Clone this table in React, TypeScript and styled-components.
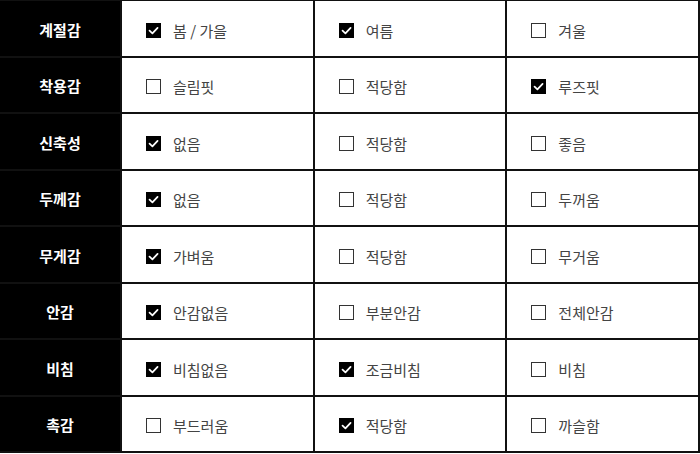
import React from "react";
import styled, { createGlobalStyle } from "styled-components";

const Global = createGlobalStyle`
  html, body { margin: 0; padding: 0; background: #fff; }
  body { font-family: "Noto Sans CJK KR", "Noto Sans", sans-serif; overflow: hidden; }
`;

const Table = styled.div`
  width: 700px;
  height: 454px;
  margin-top: -1px;
  box-sizing: border-box;
  display: grid;
  grid-template-columns: 120px repeat(3, 1fr);
  grid-template-rows: repeat(8, 1fr);
  gap: 2px;
  padding: 2px 2px 2px 0;
  background: #111;
`;

const Label = styled.div`
  background: #000;
  color: #fff;
  font-weight: 700;
  font-size: 15px;
  display: flex;
  align-items: center;
  justify-content: center;
  padding-top: 2px;
`;

const Cell = styled.div`
  background: #fff;
  display: flex;
  align-items: center;
  gap: 12px;
  padding: 4px 0 0 24px;
  font-size: 15px;
  color: #444;
`;

const Box = styled.span<{ $checked: boolean }>`
  width: 15px;
  height: 15px;
  box-sizing: border-box;
  flex: none;
  display: inline-flex;
  align-items: center;
  justify-content: center;
  background: ${(p) => (p.$checked ? "#000" : "#fff")};
  border: ${(p) => (p.$checked ? "none" : "1.3px solid #333")};
`;

const Check = () => (
  <svg width="11" height="11" viewBox="0 0 10 10">
    <path d="M1.4 5.2 L4 7.6 L8.7 2.6" fill="none" stroke="#fff" strokeWidth="1.6" strokeLinecap="round" strokeLinejoin="round" />
  </svg>
);

type Opt = [string, boolean];
const rows: { label: string; opts: Opt[] }[] = [
  { label: "계절감", opts: [["봄 / 가을", true], ["여름", true], ["겨울", false]] },
  { label: "착용감", opts: [["슬림핏", false], ["적당함", false], ["루즈핏", true]] },
  { label: "신축성", opts: [["없음", true], ["적당함", false], ["좋음", false]] },
  { label: "두께감", opts: [["없음", true], ["적당함", false], ["두꺼움", false]] },
  { label: "무게감", opts: [["가벼움", true], ["적당함", false], ["무거움", false]] },
  { label: "안감", opts: [["안감없음", true], ["부분안감", false], ["전체안감", false]] },
  { label: "비침", opts: [["비침없음", true], ["조금비침", true], ["비침", false]] },
  { label: "촉감", opts: [["부드러움", false], ["적당함", true], ["까슬함", false]] },
];

export default function App() {
  return (
    <>
      <Global />
      <Table>
        {rows.map((r) => (
          <React.Fragment key={r.label}>
            <Label>{r.label}</Label>
            {r.opts.map(([t, c], i) => (
              <Cell key={i}>
                <Box $checked={c}>{c && <Check />}</Box>
                <span>{t}</span>
              </Cell>
            ))}
          </React.Fragment>
        ))}
      </Table>
    </>
  );
}
